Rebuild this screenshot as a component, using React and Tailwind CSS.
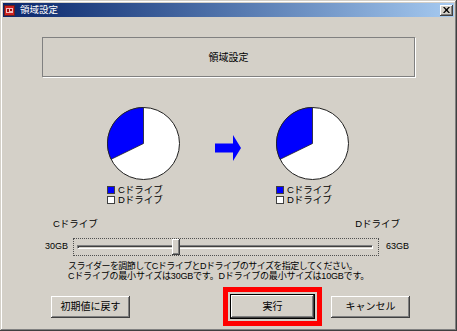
import React from "react";

const Pie = ({ size = 73, cPart = 116 }) => {
  const c = size / 2;
  const r = c - 0.5;
  const a = (cPart * Math.PI) / 180;
  const x = c - r * Math.sin(a);
  const y = c - r * Math.cos(a);
  return (
    <svg width={size} height={size} viewBox={`0 0 ${size} ${size}`}>
      <circle cx={c} cy={c} r={r} fill="#ffffff" stroke="#202020" strokeWidth="1" />
      <path d={`M${c} ${c} L${c} ${c - r} A${r} ${r} 0 0 0 ${x} ${y} Z`} fill="#0000ff" stroke="#202020" strokeWidth="0.8" />
    </svg>
  );
};

const Legend = () => (
  <div className="flex flex-col mt-[5px] text-[9.5px] leading-[10px]">
    <div className="flex items-center h-[10px]">
      <span className="w-[8px] h-[8px] bg-[#0000ff] border border-[#404040]" />
      <span className="ml-[3px]">Cドライブ</span>
    </div>
    <div className="flex items-center h-[10px]">
      <span className="w-[8px] h-[8px] bg-white border border-[#404040]" />
      <span className="ml-[3px]">Dドライブ</span>
    </div>
  </div>
);

const raised =
  "bg-[#d4d0c8] shadow-[inset_-1px_-1px_#404040,inset_1px_1px_#ffffff,inset_-2px_-2px_#808080,inset_2px_2px_#d4d0c8]";

const Button = ({ children, className = "" }) => (
  <div className={`flex items-center justify-center text-[10px] ${raised} ${className}`}>{children}</div>
);

export default function App() {
  return (
    <div className="w-[457px] h-[331px] bg-[#d4d0c8] text-black font-['Liberation_Sans','Noto_Sans_CJK_JP',sans-serif] shadow-[inset_-1px_-1px_#404040,inset_1px_1px_#d4d0c8,inset_-2px_-2px_#808080,inset_2px_2px_#ffffff] p-[3px] flex flex-col overflow-hidden">
      {/* title bar */}
      <div className="h-[14px] flex items-center bg-linear-to-r from-[#0a246a] to-[#a6caf0]">
        <svg width="11" height="11" viewBox="0 0 11 11" className="ml-[1px]">
          <rect x="0.5" y="0.5" width="10" height="10" fill="#d02020" stroke="#602020" />
          <rect x="2" y="3" width="7" height="5" fill="#f0c0c0" />
          <rect x="3" y="4" width="2" height="3" fill="#a01010" />
          <rect x="6" y="4" width="2" height="2" fill="#a01010" />
        </svg>
        <span className="ml-[5px] text-white text-[9.5px] leading-none">領域設定</span>
        <div className={`ml-auto mr-[1px] w-[13px] h-[11px] flex items-center justify-center ${raised}`}>
          <svg width="7" height="6" viewBox="0 0 7 6">
            <path d="M0 0h1.5l2 2 2-2H7L4.5 3 7 6H5.5l-2-2-2 2H0l2.5-3z" fill="#000" />
          </svg>
        </div>
      </div>

      {/* header panel */}
      <div className="mt-[20px] ml-[39px] w-[373px] h-[40px] border border-[#808080] shadow-[1px_1px_0_#ffffff] flex items-center justify-center text-[10px]">
        領域設定
      </div>

      {/* pies */}
      <div className="mt-[30px] ml-[104px] flex items-start">
        <div className="flex flex-col">
          <Pie />
          <Legend />
        </div>
        <svg width="26" height="26" viewBox="0 0 26 26" className="ml-[35px] mt-[28px]">
          <polygon points="0,8.5 18,8.5 18,0 26,13 18,26 18,17.5 0,17.5" fill="#0000ff" />
        </svg>
        <div className="flex flex-col ml-[35px]">
          <Pie />
          <Legend />
        </div>
      </div>

      {/* slider labels */}
      <div className="mt-[13px] ml-[50px] w-[347px] h-[12px] flex justify-between items-center text-[9.5px]">
        <span>Cドライブ</span>
        <span>Dドライブ</span>
      </div>

      {/* slider */}
      <div className="mt-[8px] ml-[42px] h-[18px] flex items-center text-[9px]">
        <span className="w-[28px]">30GB</span>
        <div className="relative w-[306px] h-[18px] border border-dotted border-[#505050]">
          <div className="absolute left-[3px] right-[5px] top-[6px] h-[4px] border-t border-l border-[#808080] border-b border-r border-b-white border-r-white bg-[#d4d0c8] shadow-[inset_1px_1px_#404040]" />
          <div className={`absolute left-[98px] top-[0px] w-[8px] h-[16px] ${raised}`} />
        </div>
        <span className="ml-[7px]">63GB</span>
      </div>

      {/* instructions */}
      <div className="mt-[6px] ml-[65px] text-[9px] leading-[9.5px] whitespace-nowrap tracking-[-0.2px]">
        <div className="tracking-[-0.55px]">スライダーを調節してCドライブとDドライブのサイズを指定してください。</div>
        <div>Cドライブの最小サイズは30GBです。Dドライブの最小サイズは10GBです。</div>
      </div>

      {/* buttons */}
      <div className="mt-[6px] ml-[48px] flex items-center">
        <Button className="w-[79px] h-[22px]">初期値に戻す</Button>
        <div className="ml-[93px] w-[99px] h-[39px] border-[5px] border-[#ff0000] flex items-center justify-center">
          <div className="w-[85px] h-[25px] border border-black">
            <Button className="w-full h-full">実行</Button>
          </div>
        </div>
        <Button className="ml-[9px] w-[79px] h-[22px]">キャンセル</Button>
      </div>
    </div>
  );
}
